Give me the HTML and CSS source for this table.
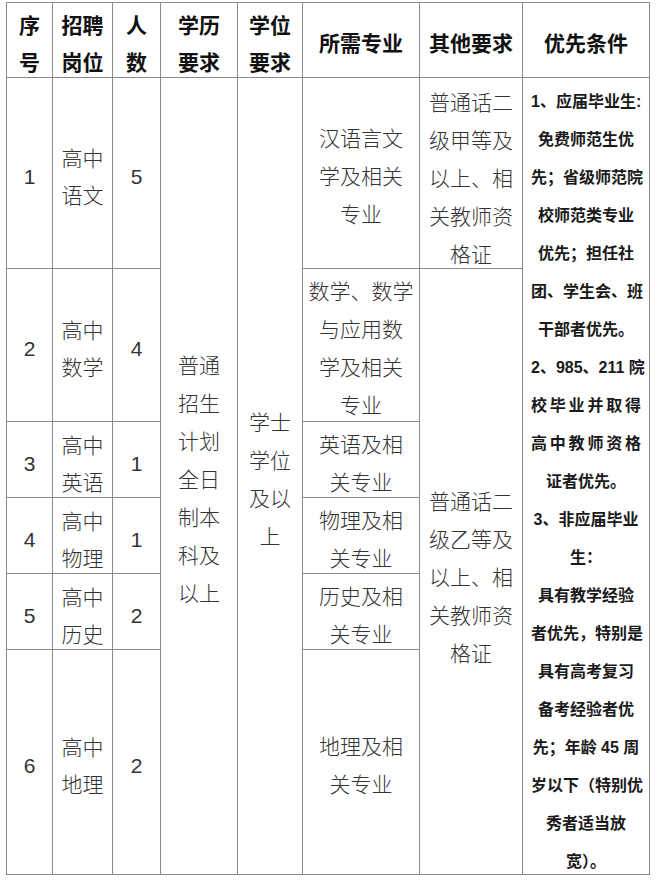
FILE: index.html
```html
<!DOCTYPE html>
<html lang="zh-CN">
<head>
<meta charset="utf-8">
<title>招聘岗位表</title>
<link rel="stylesheet" href="styles.css">
</head>
<body>
<div class="sheet">
  <div class="cell head c1 r1"><p>序<br>号</p></div>
  <div class="cell head c2 r1"><p>招聘<br>岗位</p></div>
  <div class="cell head c3 r1"><p>人<br>数</p></div>
  <div class="cell head c4 r1"><p>学历<br>要求</p></div>
  <div class="cell head c5 r1"><p>学位<br>要求</p></div>
  <div class="cell head c6 r1"><p>所需专业</p></div>
  <div class="cell head c7 r1"><p>其他要求</p></div>
  <div class="cell head c8 r1"><p>优先条件</p></div>

  <div class="cell body c1 r2"><p>1</p></div>
  <div class="cell body name c2 r2"><p>高中<br>语文</p></div>
  <div class="cell body c3 r2"><p>5</p></div>
  <div class="cell body c4 span-all"><p>普通<br>招生<br>计划<br>全日<br>制本<br>科及<br>以上</p></div>
  <div class="cell body c5 span-all"><p>学士<br>学位<br>及以<br>上</p></div>
  <div class="cell body c6 r2"><p>汉语言文<br>学及相关<br>专业</p></div>
  <div class="cell body tall c7 r2"><p>普通话二<br>级甲等及<br>以上、相<br>关教师资<br>格证</p></div>
  <div class="cell pref c8 span-all">
    <div class="ln">1、应届毕业生:</div>
    <div class="ln">免费师范生优</div>
    <div class="ln">先；省级师范院</div>
    <div class="ln">校师范类专业</div>
    <div class="ln">优先；担任社</div>
    <div class="ln">团、学生会、班</div>
    <div class="ln">干部者优先。</div>
    <div class="ln">2、985、211 院</div>
    <div class="ln jl">校毕业并取得</div>
    <div class="ln jl">高中教师资格</div>
    <div class="ln">证者优先。</div>
    <div class="ln">3、非应届毕业</div>
    <div class="ln">生：</div>
    <div class="ln">具有教学经验</div>
    <div class="ln">者优先，特别是</div>
    <div class="ln">具有高考复习</div>
    <div class="ln">备考经验者优</div>
    <div class="ln">先；年龄 45 周</div>
    <div class="ln">岁以下（特别优</div>
    <div class="ln">秀者适当放</div>
    <div class="ln">宽）。</div>
  </div>

  <div class="cell body c1 r3"><p>2</p></div>
  <div class="cell body name c2 r3"><p>高中<br>数学</p></div>
  <div class="cell body c3 r3"><p>4</p></div>
  <div class="cell body c6 r3"><p>数学、数学<br>与应用数<br>学及相关<br>专业</p></div>
  <div class="cell body tall c7 span-rest"><p>普通话二<br>级乙等及<br>以上、相<br>关教师资<br>格证</p></div>

  <div class="cell body c1 r4"><p>3</p></div>
  <div class="cell body name c2 r4"><p>高中<br>英语</p></div>
  <div class="cell body c3 r4"><p>1</p></div>
  <div class="cell body c6 r4"><p>英语及相<br>关专业</p></div>

  <div class="cell body c1 r5"><p>4</p></div>
  <div class="cell body name c2 r5"><p>高中<br>物理</p></div>
  <div class="cell body c3 r5"><p>1</p></div>
  <div class="cell body c6 r5"><p>物理及相<br>关专业</p></div>

  <div class="cell body c1 r6"><p>5</p></div>
  <div class="cell body name c2 r6"><p>高中<br>历史</p></div>
  <div class="cell body c3 r6"><p>2</p></div>
  <div class="cell body c6 r6"><p>历史及相<br>关专业</p></div>

  <div class="cell body c1 r7"><p>6</p></div>
  <div class="cell body name c2 r7"><p>高中<br>地理</p></div>
  <div class="cell body c3 r7"><p>2</p></div>
  <div class="cell body c6 r7"><p>地理及相<br>关专业</p></div>
</div>
</body>
</html>
```

FILE: styles.css
```css
html, body {
  margin: 0;
  padding: 0;
  background: #ffffff;
}

.sheet {
  display: grid;
  grid-template-columns: 45px 59px 47px 76px 64px 116px 102px 126px;
  grid-template-rows: 74px 190px 152px 75px 75px 75px 224px;
  gap: 1px;
  padding: 1px;
  background: #8a8a8a;
  width: max-content;
  margin: 2px 0 0 6px;
  font-family: "Liberation Sans", "Noto Sans CJK SC", sans-serif;
}

.cell {
  background: #ffffff;
  display: flex;
  flex-direction: column;
  justify-content: center;
  align-items: center;
  text-align: center;
  min-height: 0;
  min-width: 0;
  box-sizing: border-box;
}

.cell p {
  margin: 0;
  white-space: nowrap;
}

.head {
  padding-top: 7px;
  font-size: 21px;
  line-height: 37px;
  font-weight: 700;
  color: #111111;
}

.body {
  padding-top: 8px;
  font-size: 21px;
  line-height: 38px;
  font-weight: 300;
  color: #333333;
}

.name {
  line-height: 37px;
}

.tall {
  padding-top: 12px;
}

.pref {
  padding: 12px 8px 0;
  align-items: stretch;
  font-size: 16px;
  line-height: 38px;
  font-weight: 700;
  color: #1a1a1a;
}

.ln {
  white-space: nowrap;
  text-align: center;
}

.jl {
  text-align: justify;
  text-align-last: justify;
}

.c1 { grid-column: 1; }
.c2 { grid-column: 2; }
.c3 { grid-column: 3; }
.c4 { grid-column: 4; }
.c5 { grid-column: 5; }
.c6 { grid-column: 6; }
.c7 { grid-column: 7; }
.c8 { grid-column: 8; }

.r1 { grid-row: 1; }
.r2 { grid-row: 2; }
.r3 { grid-row: 3; }
.r4 { grid-row: 4; }
.r5 { grid-row: 5; }
.r6 { grid-row: 6; }
.r7 { grid-row: 7; }
.span-all { grid-row: 2 / 8; }
.span-rest { grid-row: 3 / 8; }
```
